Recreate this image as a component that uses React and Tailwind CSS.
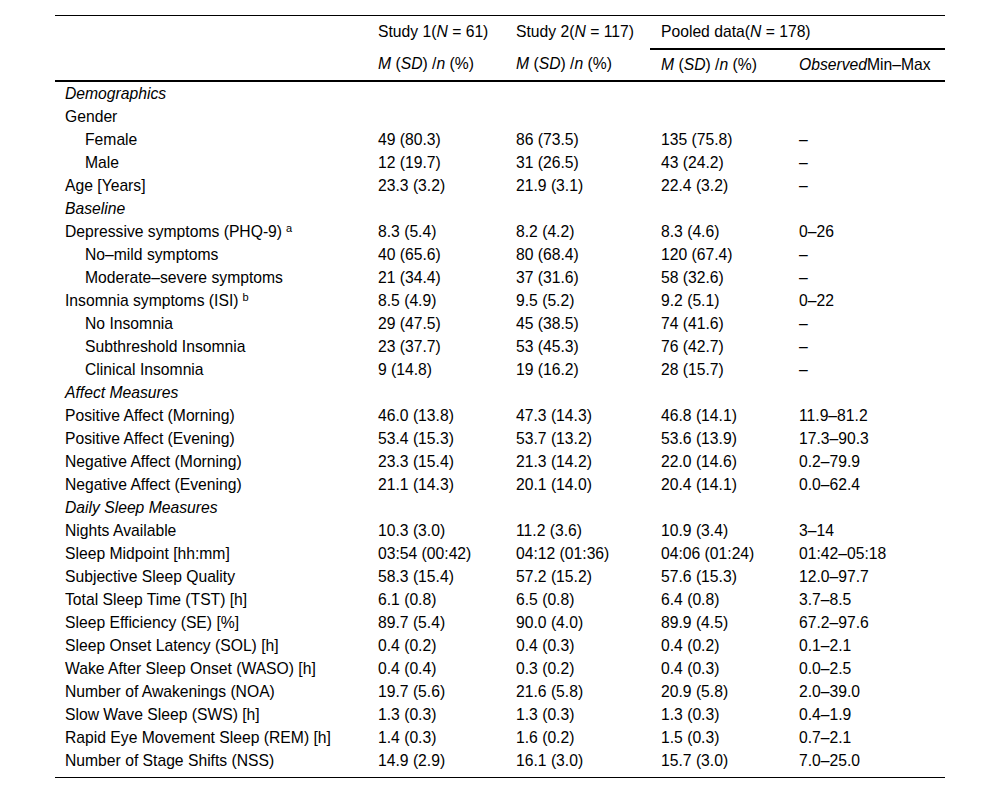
import React from 'react';

const rows = [
  { label: 'Demographics', section: true },
  { label: 'Gender' },
  { label: 'Female', indent: true, v: ['49 (80.3)', '86 (73.5)', '135 (75.8)', '–'] },
  { label: 'Male', indent: true, v: ['12 (19.7)', '31 (26.5)', '43 (24.2)', '–'] },
  { label: 'Age [Years]', v: ['23.3 (3.2)', '21.9 (3.1)', '22.4 (3.2)', '–'] },
  { label: 'Baseline', section: true },
  { label: 'Depressive symptoms (PHQ-9)', sup: 'a', v: ['8.3 (5.4)', '8.2 (4.2)', '8.3 (4.6)', '0–26'] },
  { label: 'No–mild symptoms', indent: true, v: ['40 (65.6)', '80 (68.4)', '120 (67.4)', '–'] },
  { label: 'Moderate–severe symptoms', indent: true, v: ['21 (34.4)', '37 (31.6)', '58 (32.6)', '–'] },
  { label: 'Insomnia symptoms (ISI)', sup: 'b', v: ['8.5 (4.9)', '9.5 (5.2)', '9.2 (5.1)', '0–22'] },
  { label: 'No Insomnia', indent: true, v: ['29 (47.5)', '45 (38.5)', '74 (41.6)', '–'] },
  { label: 'Subthreshold Insomnia', indent: true, v: ['23 (37.7)', '53 (45.3)', '76 (42.7)', '–'] },
  { label: 'Clinical Insomnia', indent: true, v: ['9 (14.8)', '19 (16.2)', '28 (15.7)', '–'] },
  { label: 'Affect Measures', section: true },
  { label: 'Positive Affect (Morning)', v: ['46.0 (13.8)', '47.3 (14.3)', '46.8 (14.1)', '11.9–81.2'] },
  { label: 'Positive Affect (Evening)', v: ['53.4 (15.3)', '53.7 (13.2)', '53.6 (13.9)', '17.3–90.3'] },
  { label: 'Negative Affect (Morning)', v: ['23.3 (15.4)', '21.3 (14.2)', '22.0 (14.6)', '0.2–79.9'] },
  { label: 'Negative Affect (Evening)', v: ['21.1 (14.3)', '20.1 (14.0)', '20.4 (14.1)', '0.0–62.4'] },
  { label: 'Daily Sleep Measures', section: true },
  { label: 'Nights Available', v: ['10.3 (3.0)', '11.2 (3.6)', '10.9 (3.4)', '3–14'] },
  { label: 'Sleep Midpoint [hh:mm]', v: ['03:54 (00:42)', '04:12 (01:36)', '04:06 (01:24)', '01:42–05:18'] },
  { label: 'Subjective Sleep Quality', v: ['58.3 (15.4)', '57.2 (15.2)', '57.6 (15.3)', '12.0–97.7'] },
  { label: 'Total Sleep Time (TST) [h]', v: ['6.1 (0.8)', '6.5 (0.8)', '6.4 (0.8)', '3.7–8.5'] },
  { label: 'Sleep Efficiency (SE) [%]', v: ['89.7 (5.4)', '90.0 (4.0)', '89.9 (4.5)', '67.2–97.6'] },
  { label: 'Sleep Onset Latency (SOL) [h]', v: ['0.4 (0.2)', '0.4 (0.3)', '0.4 (0.2)', '0.1–2.1'] },
  { label: 'Wake After Sleep Onset (WASO) [h]', v: ['0.4 (0.4)', '0.3 (0.2)', '0.4 (0.3)', '0.0–2.5'] },
  { label: 'Number of Awakenings (NOA)', v: ['19.7 (5.6)', '21.6 (5.8)', '20.9 (5.8)', '2.0–39.0'] },
  { label: 'Slow Wave Sleep (SWS) [h]', v: ['1.3 (0.3)', '1.3 (0.3)', '1.3 (0.3)', '0.4–1.9'] },
  { label: 'Rapid Eye Movement Sleep (REM) [h]', v: ['1.4 (0.3)', '1.6 (0.2)', '1.5 (0.3)', '0.7–2.1'] },
  { label: 'Number of Stage Shifts (NSS)', v: ['14.9 (2.9)', '16.1 (3.0)', '15.7 (3.0)', '7.0–25.0'] },
];

const MSD = () => (
  <>
    <i>M</i> (<i>SD</i>) /<i>n</i> (%)
  </>
);

export default function App() {
  return (
    <div className="bg-white w-[1000px] h-[793px] pt-[15px] pl-[55px] text-black text-[15.7px] leading-[18px] font-['Liberation_Sans',Arial,sans-serif]">
      <table className="table-fixed border-collapse w-[890px] border-t border-black">
        <colgroup>
          <col className="w-[313px]" />
          <col className="w-[138px]" />
          <col className="w-[144px]" />
          <col className="w-[139px]" />
          <col className="w-[156px]" />
        </colgroup>
        <thead>
          <tr className="h-[33px]">
            <th />
            <th className="text-left font-normal pl-[10px]">Study 1(<i>N</i> = 61)</th>
            <th className="text-left font-normal pl-[10px]">Study 2(<i>N</i> = 117)</th>
            <th colSpan={2} className="text-left font-normal pl-[11px] border-b-2 border-black">
              Pooled data(<i>N</i> = 178)
            </th>
          </tr>
          <tr className="h-[32px] border-b-2 border-black">
            <th />
            <th className="text-left font-normal pl-[10px]"><MSD /></th>
            <th className="text-left font-normal pl-[10px]"><MSD /></th>
            <th className="text-left font-normal pl-[11px]"><MSD /></th>
            <th className="text-left font-normal pl-[10px]"><i>Observed</i>Min–Max</th>
          </tr>
        </thead>
        <tbody>
          {rows.map((r, i) => (
            <tr key={i} className={i === 0 ? 'h-[25px]' : 'h-[23px]'}>
              <td className={(r.indent ? 'pl-[30px]' : 'pl-[10px]') + (i === 0 ? ' pt-[1px]' : '')}>
                {r.section ? <i>{r.label}</i> : r.label}
                {r.sup && <sup className="text-[11px] ml-[4px]">{r.sup}</sup>}
              </td>
              {(r.v || ['', '', '', '']).map((c, j) => (
                <td key={j} className={j === 2 ? 'pl-[11px]' : 'pl-[10px]'}>{c}</td>
              ))}
            </tr>
          ))}
          <tr className="h-[5px]">
            <td colSpan={5} className="border-b border-black p-0" />
          </tr>
        </tbody>
      </table>
    </div>
  );
}
